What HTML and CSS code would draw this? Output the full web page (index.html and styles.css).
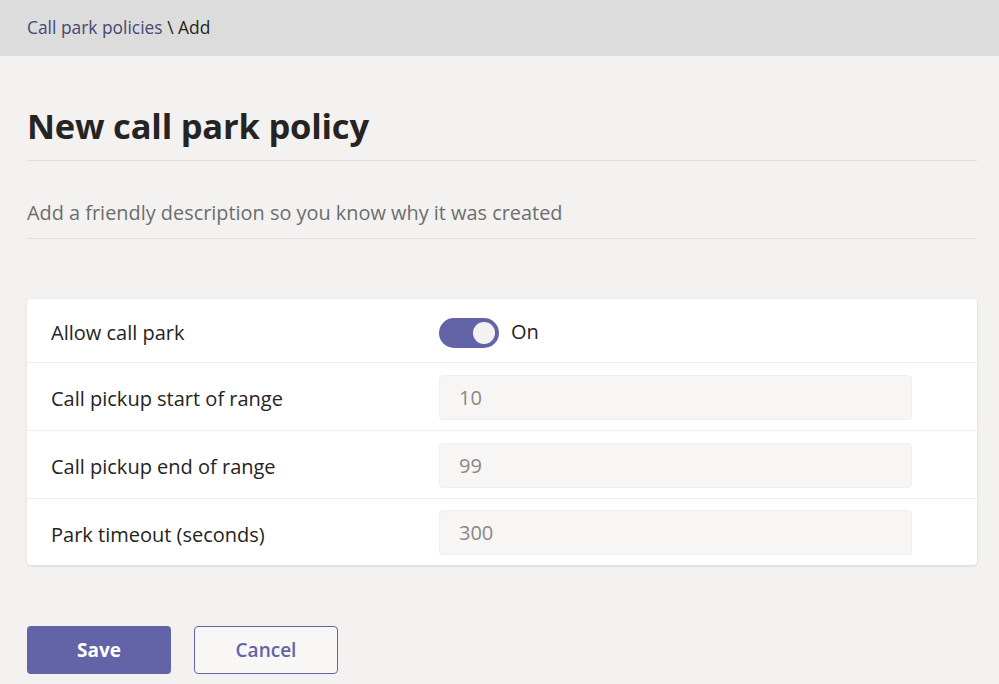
FILE: index.html
```html
<!DOCTYPE html>
<html lang="en">
<head>
<meta charset="utf-8">
<title>New call park policy</title>
<link rel="stylesheet" href="styles.css">
</head>
<body>
<header class="topbar">
  <nav class="crumbs"><a class="crumb-link">Call park policies</a> <span class="sep">\</span> <span class="crumb-current">Add</span></nav>
</header>
<main class="content">
  <h1 class="title">New call park policy</h1>
  <div class="desc">Add a friendly description so you know why it was created</div>
  <section class="card">
    <div class="row">
      <div class="label">Allow call park</div>
      <div class="control">
        <span class="toggle"><span class="thumb"></span></span>
        <span class="toggle-text">On</span>
      </div>
    </div>
    <div class="row">
      <div class="label">Call pickup start of range</div>
      <div class="control"><div class="input">10</div></div>
    </div>
    <div class="row">
      <div class="label">Call pickup end of range</div>
      <div class="control"><div class="input">99</div></div>
    </div>
    <div class="row">
      <div class="label">Park timeout (seconds)</div>
      <div class="control"><div class="input">300</div></div>
    </div>
  </section>
  <div class="actions">
    <button class="btn btn-primary">Save</button>
    <button class="btn btn-secondary">Cancel</button>
  </div>
</main>
</body>
</html>
```
FILE: styles.css
```css
* { box-sizing: border-box; }
html, body { margin: 0; padding: 0; }
body {
  background: #f3f2f1;
  font-family: "Segoe UI", "Open Sans", "Noto Sans", sans-serif;
  color: #252423;
  width: 999px;
  height: 684px;
  overflow: hidden;
}
.topbar {
  height: 56px;
  background: #dddcdc;
  display: flex;
  align-items: center;
  padding: 0 27px 2px;
  font-size: 17.4px;
}
.crumb-link { color: #464775; }
.sep, .crumb-current { color: #252423; }
.content { padding: 0 22px 0 27px; }
.title {
  margin: 0;
  padding-top: 42px;
  height: 105px;
  font-size: 34.5px;
  font-weight: 700;
  line-height: 56px;
  border-bottom: 1px solid #e1dfdd;
  color: #252423;
  letter-spacing: -0.2px;
}
.desc {
  height: 78px;
  padding-top: 38px;
  font-size: 19.9px;
  line-height: 28px;
  color: #6e6d6c;
  border-bottom: 1px solid #e1dfdd;
}
.card {
  margin-top: 60px;
  background: #ffffff;
  border-radius: 4px;
  box-shadow: 0 1px 3px rgba(0,0,0,0.12);
}
.row {
  display: flex;
  align-items: center;
  height: 68px;
  padding: 0 24px;
  border-top: 1px solid #f0efee;
}
.row:first-child { border-top: none; height: 63px; }
.row:last-child { height: 67px; }
.label {
  width: 388px;
  font-size: 20px;
  color: #252423;
  padding-top: 4px;
}
.control { display: flex; align-items: center; flex: 0 0 473px; }
.toggle {
  width: 60px;
  height: 30px;
  border-radius: 15px;
  background: #6264a7;
  position: relative;
  margin-top: 4px;
}
.thumb {
  position: absolute;
  right: 4px;
  top: 4px;
  width: 22px;
  height: 22px;
  border-radius: 50%;
  background: #f3f2f1;
}
.toggle-text { margin-left: 12px; font-size: 20px; color: #252423; padding-top: 2px; }
.input {
  width: 473px;
  height: 45px;
  background: #f7f6f5;
  border-radius: 4px;
  border: 1px solid #f0efee;
  padding: 0 19px;
  display: flex;
  align-items: center;
  font-size: 20px;
  color: #8a8886;
  margin-top: 1px;
}
.actions {
  margin-top: 61px;
  display: flex;
  gap: 23px;
}
.btn {
  width: 144px;
  height: 48px;
  border-radius: 4px;
  font-family: inherit;
  font-size: 19px;
  font-weight: 700;
  padding: 0;
}
.btn-primary { background: #6264a7; color: #ffffff; border: none; }
.btn-secondary { background: #f8f7f6; color: #6264a7; border: 1px solid #6264a7; font-weight: 600; }
```
